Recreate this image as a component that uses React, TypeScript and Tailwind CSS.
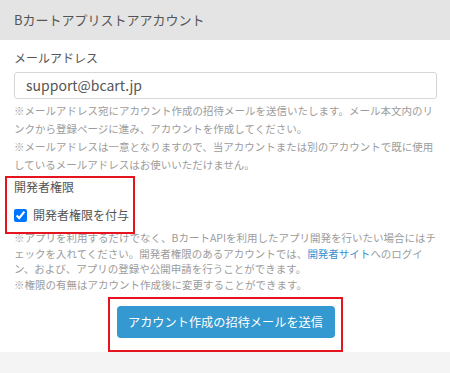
import React from "react";

export default function App() {
  const jp = { fontFamily: '"Noto Sans CJK JP", "Noto Sans", sans-serif' };
  return (
    <div className="w-[450px] h-[373px] bg-[#f4f4f4] overflow-hidden" style={jp}>
      <div className="h-[40px] bg-[#e4e4e4] flex items-center px-[14px] text-[13px] text-[#555]">
        Bカートアプリストアアカウント
      </div>
      <div className="bg-white px-[14px] pr-[13px] pt-[9px] pb-[14px]">
        <div className="text-[12px] leading-[18px] text-[#555]">メールアドレス</div>
        <div className="mt-[5px] h-[27px] border border-[#d6d6d6] rounded-[3px] flex items-center px-[11px] text-[14px] text-[#555]">
          support@bcart.jp
        </div>
        <div className="mt-[3px] text-[10.5px] leading-[18px] text-[#9c9c9c] [line-break:loose]">
          <p>※メールアドレス宛にアカウント作成の招待メールを送信いたします。メール本文内のリンクから登録ページに進み、アカウントを作成してください。</p>
          <p>※メールアドレスは一意となりますので、当アカウントまたは別のアカウントで既に使用しているメールアドレスはお使いいただけません。</p>
        </div>
        <div className="relative mt-[2px]">
          <div className="absolute left-[-9px] top-[0px] w-[130px] h-[58px] border-2 border-[#e6141e]" />
          <div className="pt-[2px] text-[12px] leading-[18px] text-[#555]">開発者権限</div>
          <label className="mt-[10px] flex items-center gap-[6px] text-[12px] leading-[18px] text-[#555]">
            <input type="checkbox" defaultChecked className="m-0 w-[13px] h-[13px] accent-[#0075ff]" />
            <span>開発者権限を付与</span>
          </label>
          <div className="h-[6px]" />
        </div>
        <div className="text-[10.5px] leading-[15.5px] text-[#9c9c9c] [line-break:loose]">
          <p>
            ※アプリを利用するだけでなく、BカートAPIを利用したアプリ開発を行いたい場合にはチェックを入れてください。開発者権限のあるアカウントでは、<span className="text-[#3a8fd0]">開発者サイト</span>へのログイン、および、アプリの登録や公開申請を行うことができます。
          </p>
          <p>※権限の有無はアカウント作成後に変更することができます。</p>
        </div>
        <div className="relative mt-[14px] flex justify-center">
          <div className="absolute left-[94px] top-[-9px] w-[235px] h-[55px] border-2 border-[#e6141e]" />
          <button className="w-[218px] h-[32px] rounded-[4px] bg-[#3399d0] text-white text-[12.2px]">
            アカウント作成の招待メールを送信
          </button>
        </div>
      </div>
    </div>
  );
}
